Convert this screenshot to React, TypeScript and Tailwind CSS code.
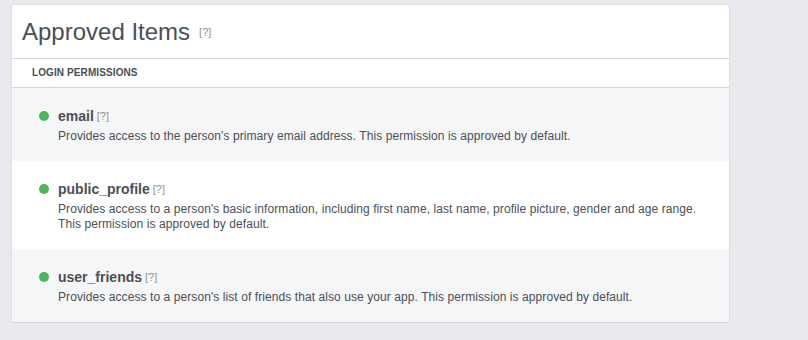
import React from "react";

const items = [
  {
    name: "email",
    desc: ["Provides access to the person's primary email address. This permission is approved by default."],
    shaded: true,
  },
  {
    name: "public_profile",
    desc: [
      "Provides access to a person's basic information, including first name, last name, profile picture, gender and age range.",
      "This permission is approved by default.",
    ],
    shaded: false,
  },
  {
    name: "user_friends",
    desc: ["Provides access to a person's list of friends that also use your app. This permission is approved by default."],
    shaded: true,
  },
];

const Help = ({ className = "" }: { className?: string }) => (
  <span className={`text-[11px] font-normal text-[#90949c] ${className}`}>[?]</span>
);

export default function App() {
  return (
    <div className="min-h-[340px] w-[808px] bg-[#e9eaed] pl-[11px] pt-[4px] font-['Liberation_Sans',Arial,sans-serif] text-[#4b4f56]">
      <div className="w-[719px] overflow-hidden rounded-[3px] border border-[#dddfe2] border-b-[#d0d1d5] bg-white">
        {/* header */}
        <div className="flex h-[54px] items-center border-b border-[#d3d6db] pl-[10px]">
          <h1 className="text-[24px] leading-[28px] text-[#4b4f56]">Approved Items</h1>
          <Help className="ml-[9px] mt-[2px]" />
        </div>

        {/* section label */}
        <div className="flex h-[29px] items-center border-b border-[#d3d6db] pb-[1px] pl-[20px]">
          <span className="text-[10px] font-bold uppercase tracking-[0.1px] text-[#4b4f56]">Login Permissions</span>
        </div>

        {items.map((item) => (
          <div
            key={item.name}
            className={`flex pb-[17px] pl-[27px] pt-[19px] ${item.shaded ? "bg-[#f5f6f7]" : "bg-white"}`}
          >
            <div className="mt-[4px] h-[10px] w-[10px] shrink-0 rounded-full bg-[#4bb75a]" />
            <div className="ml-[9px]">
              <div className="flex items-center leading-[18px]">
                <span className="text-[14px] font-bold text-[#4b4f56]">{item.name}</span>
                <Help className="ml-[3px]" />
              </div>
              <div className="mt-[4px] text-[12px] leading-[15px] tracking-[0.08px] text-[#4b4f56]">
                {item.desc.map((line) => (
                  <div key={line}>{line}</div>
                ))}
              </div>
            </div>
          </div>
        ))}
      </div>
    </div>
  );
}
